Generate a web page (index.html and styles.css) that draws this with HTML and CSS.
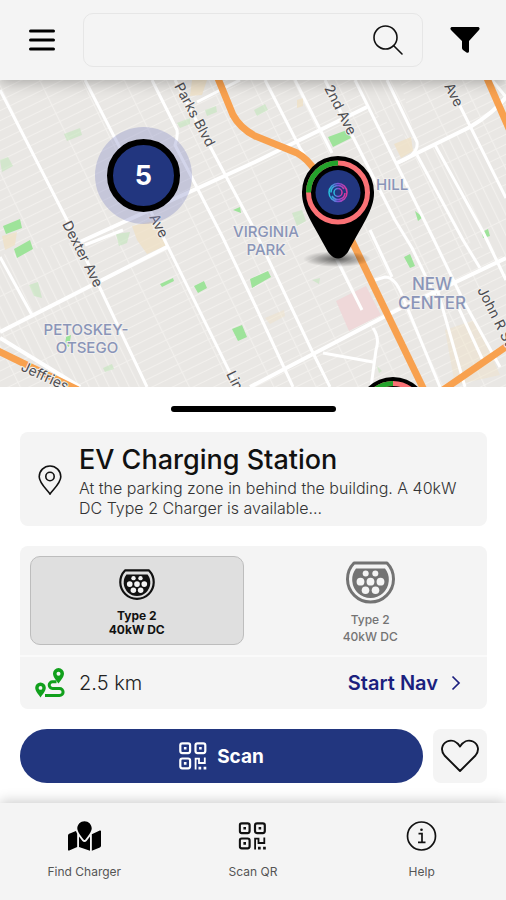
FILE: index.html
```html
<!DOCTYPE html>
<html lang="en">
<head>
<meta charset="utf-8">
<meta name="viewport" content="width=device-width, initial-scale=1">
<title>Find Charger</title>
<link rel="stylesheet" href="styles.css">
</head>
<body>
<svg class="defs" aria-hidden="true">
  <symbol id="qr" viewBox="0 0 28 28">
    <g fill="none" stroke="currentColor" stroke-width="2.2">
      <rect x="1.3" y="1.3" width="9.8" height="9.8" rx="2"/>
      <rect x="16.5" y="1.3" width="9.8" height="9.8" rx="2"/>
      <rect x="1.3" y="16.5" width="9.8" height="9.8" rx="2"/>
      <path d="M16.6 27.5V16.6H20V21H25.8V15.4" stroke-width="1.8"/>
    </g>
    <path fill="currentColor" d="M4.9 4.9h2.600v2.600H4.900zM20.100 4.900h2.600v2.600H20.100zM4.900 20.100h2.600v2.600H4.900zM19.500 24.800h2.700v2.700h-2.700zM24.600 24.800h2.700v2.700h-2.700z"/>
  </symbol>
  <symbol id="type2" viewBox="0 0 49 44">
    <path d="M8 2H41A23 23 0 1 1 8 2Z" fill="none" stroke="currentColor" stroke-width="3" stroke-linejoin="round"/>
    <path d="M10 7.5H39A18.3 18.3 0 1 1 10 7.5Z" fill="currentColor"/>
    <g class="pins">
      <circle cx="19.7" cy="12.6" r="3"/><circle cx="29.3" cy="12.6" r="3"/>
      <circle cx="14.5" cy="20.7" r="3.9"/><circle cx="24.5" cy="20.7" r="3.9"/><circle cx="34.5" cy="20.7" r="3.9"/>
      <circle cx="19.5" cy="29.2" r="3.8"/><circle cx="29.5" cy="29.2" r="3.8"/>
    </g>
  </symbol>
</svg>

<header class="topbar">
  <button class="icon-btn" type="button" aria-label="Menu">
    <svg width="26" height="24" viewBox="0 0 26 24"><path d="M1.500 3H24.500M1.500 12H24.500M1.500 21H24.500" stroke="#000" stroke-width="3" stroke-linecap="round"/></svg>
  </button>
  <form class="search" role="search">
    <input class="search-input" type="search" aria-label="Search">
    <button class="search-btn" type="submit" aria-label="Search">
      <svg width="32" height="32" viewBox="0 0 32 32" fill="none" stroke="#111" stroke-width="1.600" stroke-linecap="round"><circle cx="13.500" cy="13.500" r="11.500"/><path d="M21.500 21.500L30 30"/></svg>
    </button>
  </form>
  <button class="icon-btn" type="button" aria-label="Filter">
    <svg width="30" height="26" viewBox="0 0 30 26"><path d="M1.500 0H28.500Q30.400 1 29 3L19 14V24.500Q18.500 26.500 16.500 25.400L13 23Q12 22.200 12 21V14L1 3Q-.4 1 1.500 0Z"/></svg>
  </button>
</header>

<main>
  <section class="map" aria-label="Map">
    <svg class="map-canvas" viewBox="0 80 506 307">
      <defs>
        <pattern id="blocks" width="38" height="9" patternUnits="userSpaceOnUse" patternTransform="rotate(-26)">
          <path d="M0 .5H38M.5 0V9" stroke="#f2f0ed" stroke-width="1.200"/>
        </pattern>
        <pattern id="blocksTall" width="9" height="38" patternUnits="userSpaceOnUse" patternTransform="rotate(-26)">
          <path d="M0 .5H9M.5 0V38" stroke="#f2f0ed" stroke-width="1.200"/>
        </pattern>
        <radialGradient id="pinShade"><stop offset="0" stop-color="#000" stop-opacity=".6"/><stop offset="1" stop-color="#000" stop-opacity="0"/></radialGradient>
        <linearGradient id="spiral"><stop offset="0" stop-color="#25c3dc"/><stop offset=".5" stop-color="#7b52d8"/><stop offset="1" stop-color="#e0379b"/></linearGradient>
      </defs>
      <rect y="80" width="506" height="307" fill="#e9e7e4"/>
      <rect y="80" width="506" height="307" fill="url(#blocks)"/>
      <path d="M0 255L85 240L100 288L0 332ZM0 332L100 288L147 387H80L0 340ZM352 80H400L417 145L370 110ZM417 155L470 127L506 198V258L463 240Z" fill="#e9e7e4"/>
      <path d="M0 255L85 240L100 288L0 332ZM0 332L100 288L147 387H80L0 340ZM352 80H400L417 145L370 110ZM417 155L470 127L506 198V258L463 240Z" fill="url(#blocksTall)"/>

      <path fill="#efe0c4" d="M132 226L153 221L167 245L147 254L137 240ZM2 236L17 232L15 245L5 250ZM192 80H207L202 95L190 96ZM394 144L411 137L413 151L401 158ZM297 100L303 98V106L297 108Z" opacity=".75"/>
      <path fill="#efe2c4" d="M445 330L475 320L500 375L455 385ZM265 318L284 310L285 316L270 324Z" opacity=".4"/>
      <path fill="#efd8d9" d="M336 301L366 286L381 315L349 331Z"/>
      <path fill="#9ee39a" d="M3 226L20 219L22 228L6 234ZM14 249L30 240L33 249L17 258ZM328 137L347 130L351 138L333 147ZM250 279L268 271L271 277L252 288ZM194 286L204 281L207 288L198 293ZM232 329L242 325L247 337L238 341ZM404 257L410 254L415 266L410 268ZM415 211L423 217L418 221ZM482 232L488 229L490 236L483 238ZM160 284L173 278L174 281L162 287ZM233 210L240 207L241 213ZM66 337L71 335L69 347L65 345Z"/>
      <path fill="#bfe6b8" opacity=".55" d="M64 134L80 128L82 135L67 141ZM0 160L8 157L13 166L2 172ZM116 234L130 232L127 243L119 246ZM29 285L38 282L42 298L34 296ZM254 110L265 104L268 110L257 116ZM292 213L302 210L306 221L297 226ZM205 110L216 106L217 112L207 116ZM177 123L190 118L190 124L180 128ZM103 368L112 364L114 369L105 372ZM312 280L320 278L319 284ZM377 366L382 371L379 373Z"/>

      <g fill="none" stroke="#fff" stroke-width="3" stroke-linejoin="round">
        <path d="M0 90L67 220L100 288L147 387"/>
        <path d="M85 80L120 148L167 245L237 387"/>
        <path d="M152 80L177 130Q178 137 175 145L223 238L255 305L293 387"/>
        <path d="M175 80L213 152L252 225L313 353L330 387"/>
        <path d="M265 80L300 148L318 175"/>
        <path d="M295 80L332 153"/>
        <path d="M325 80L353 137L395 220L412 248L437 300"/>
        <path d="M355 80L433 238L463 300L500 367"/>
        <path d="M387 80L417 142Q419 155 397 163"/>
        <path d="M80 242L255 162L367 107" stroke-width="4"/>
        <path d="M197 102L240 80"/>
        <path d="M397 163L470 127Q495 112 506 97" stroke-width="4"/>
        <path d="M435 145L483 232L506 280"/>
        <path d="M417 155L463 240L480 268"/>
        <path d="M457 100L506 198"/>
        <path d="M492 80L506 97"/>
        <path d="M0 332L167 247" stroke-width="4"/>
        <path d="M0 338L80 387" stroke-width="4"/>
        <path d="M0 257L32 315"/>
        <path d="M85 245L123 230"/>
        <path d="M250 387L397 310L506 258" stroke-width="4"/>
        <path d="M323 353L373 362M373 328Q380 338 376 350L371 387"/>
        <path d="M370 230L392 277M375 280L385 277Q395 277 402 295L440 387"/>
        <path d="M438 292L465 387M455 300L485 365M330 246L362 310"/>
      </g>
      <g fill="none" stroke="#f8a14f" stroke-width="7">
        <path d="M217 76L233 115Q240 128 255 136L297 153Q308 159 316 172"/>
        <path d="M350 237L424 390"/>
        <path d="M486 76L510 131"/>
        <path d="M443 390L510 344"/>
        <path d="M-4 350L78 390"/>
      </g>

      <g class="street">
        <text transform="translate(174 86) rotate(62)">Parks Blvd</text>
        <text transform="translate(324 88) rotate(63)">2nd Ave</text>
        <text transform="translate(444 86) rotate(63)">Ave</text>
        <text transform="translate(62 224) rotate(63)">Dexter Ave</text>
        <text transform="translate(149 217) rotate(63)">Ave</text>
        <text transform="translate(477 290) rotate(63)">John R St</text>
        <text transform="translate(20 370) rotate(25)">Jeffries</text>
        <text transform="translate(226 374) rotate(63)">Lin</text>
      </g>
      <g class="district">
        <text x="266" y="237">VIRGINIA</text>
        <text x="266" y="255">PARK</text>
        <text x="376" y="190" class="from-left">HILL</text>
        <text x="86" y="335">PETOSKEY-</text>
        <text x="87" y="353">OTSEGO</text>
        <text x="432" y="290" class="large">NEW</text>
        <text x="432" y="309" class="large">CENTER</text>
      </g>

      <ellipse cx="337" cy="259" rx="34" ry="8" fill="url(#pinShade)"/>
      <path d="M338 156A36 36 0 0 1 374 193C374 210 362 225 348 252Q338 265 328 252C314 225 302 210 302 193A36 36 0 0 1 338 156Z"/>
      <circle cx="338" cy="192.500" r="22.500" fill="#22367f"/>
      <circle cx="338" cy="192.500" r="29.500" fill="none" stroke="#fa7175" stroke-width="5"/>
      <path d="M308.500 192.500A29.500 29.500 0 0 1 338 163" fill="none" stroke="#24a32c" stroke-width="5"/>
      <g fill="none" stroke="url(#spiral)" stroke-width="1.500">
        <circle cx="338" cy="192.500" r="9"/><circle cx="338" cy="192.500" r="4"/>
        <path d="M331 192.500A7 7 0 0 1 344 189M345 193A7 7 0 0 1 332 196"/>
      </g>
      <circle cx="393" cy="413" r="36"/>
      <circle cx="393" cy="413" r="29.500" fill="none" stroke="#fa7175" stroke-width="5"/>
      <path d="M363.500 413A29.500 29.500 0 0 1 393 383.500" fill="none" stroke="#24a32c" stroke-width="5"/>
      <circle cx="143.500" cy="175.500" r="48.500" fill="#8b91c9" opacity=".38"/>
      <circle cx="143.500" cy="175.500" r="33.500" fill="#22367f" stroke="#000" stroke-width="6"/>
      <text class="cluster-count" x="143.500" y="185">5</text>
    </svg>
  </section>

  <section class="sheet" aria-label="Selected station">
    <div class="grabber"></div>

    <article class="card station">
      <svg class="station-pin" width="24" height="30" viewBox="0 0 24 30" fill="none" stroke="#111" stroke-width="1.600"><path d="M12 29C10 25.500 1.200 18.500 1.200 11.800A10.800 10.800 0 0 1 22.800 11.800C22.800 18.500 14 25.500 12 29Z"/><circle cx="12" cy="11.500" r="4.200"/></svg>
      <div class="station-text">
        <h1 class="station-name">EV Charging Station</h1>
        <p class="station-info">At the parking zone in behind the building. A 40kW DC Type 2 Charger is available...</p>
      </div>
    </article>

    <div class="card options">
      <div class="connectors">
        <button class="connector selected" type="button" aria-pressed="true">
          <svg class="plug"><use href="#type2"/></svg>
          <span>Type 2<br>40kW DC</span>
        </button>
        <button class="connector" type="button" aria-pressed="false">
          <svg class="plug"><use href="#type2"/></svg>
          <span>Type 2<br>40kW DC</span>
        </button>
      </div>
      <div class="distance-row">
        <svg width="30" height="30" viewBox="0 0 30 30" fill="#11a01c">
          <path fill-rule="evenodd" d="M23.500 0A5.600 5.600 0 0 1 29 5.600C29 9 25.500 13 23.500 15.500C21.500 13 18 9 18 5.600A5.600 5.600 0 0 1 23.500 0ZM23.500 3.700A2 2 0 1 0 23.500 7.700A2 2 0 1 0 23.500 3.700Z"/>
          <path fill-rule="evenodd" d="M5.500 14.500A5.300 5.300 0 0 1 10.800 19.800C10.800 23 7.500 26.500 5.500 29.500C3.500 26.500 .2 23 .2 19.800A5.300 5.300 0 0 1 5.500 14.500ZM5.500 18A1.900 1.900 0 1 0 5.500 21.800A1.900 1.900 0 1 0 5.500 18Z"/>
          <path d="M21.500 13.800H17.500A3.300 3.300 0 0 0 17.500 20.400H24.500A3.600 3.600 0 0 1 24.500 27.600H10" fill="none" stroke="#11a01c" stroke-width="3"/>
        </svg>
        <span class="distance">2.5 km</span>
        <a class="start-nav" href="#nav">Start Nav
          <svg width="10" height="16" viewBox="0 0 10 16" fill="none" stroke="#1b1f7e" stroke-width="1.700"><path d="M1.500 1.500L8 8L1.500 14.500"/></svg>
        </a>
      </div>
    </div>

    <div class="actions">
      <button class="scan" type="button"><svg class="scan-icon"><use href="#qr"/></svg>Scan</button>
      <button class="favourite" type="button" aria-label="Add to favourites">
        <svg width="38" height="34" viewBox="0 0 38 34" fill="none" stroke="#111" stroke-width="1.900" stroke-linejoin="round"><path d="M19 32L3.500 16.500C-.8 11.500 .8 5 6 2.500C11 .2 16 2.500 19 7.500C22 2.500 27 .2 32 2.500C37.200 5 38.800 11.500 34.500 16.500Z"/></svg>
      </button>
    </div>
  </section>
</main>

<nav class="tabs" aria-label="Main">
  <a class="tab" href="#find">
    <svg class="tab-icon" viewBox="0 0 576 512"><path d="M288 0c-69.590 0-126 56.410-126 126 0 56.260 82.350 158.800 113.900 196.020 6.390 7.540 17.820 7.540 24.200 0C331.650 284.800 414 182.260 414 126 414 56.410 357.590 0 288 0zM20.120 215.950A32.006 32.006 0 0 0 0 245.660v250.320c0 11.320 11.430 19.060 21.940 14.860L160 448V214.920c-8.840-15.980-16.070-31.540-21.250-46.420L20.120 215.950zM288 359.670c-14.070 0-27.380-6.180-36.510-16.960-19.660-23.200-40.570-49.620-59.490-76.720v182l192 64V266c-18.920 27.090-39.820 53.520-59.490 76.720-9.130 10.770-22.440 16.950-36.510 16.950zM554.060 161.160L416 224v288l139.880-55.950A31.996 31.996 0 0 0 576 426.340V176.020c0-11.320-11.430-19.060-21.940-14.860z"/></svg>
    Find Charger
  </a>
  <a class="tab" href="#scan">
    <svg class="tab-icon" viewBox="-2 -1 32 30"><use href="#qr" width="28" height="28"/></svg>
    Scan QR
  </a>
  <a class="tab" href="#help">
    <svg class="tab-icon" viewBox="0 0 30 30" fill="none" stroke="#111" stroke-width="1.700"><circle cx="15" cy="15" r="14"/><path d="M12 12.700H15.500V21M11.500 21.300H19"/><circle cx="15" cy="8.700" r="1.300" fill="#111" stroke="none"/></svg>
    Help
  </a>
</nav>
</body>
</html>
```
FILE: styles.css
```css
* {
  box-sizing: border-box;
}

body {
  margin: 0;
  min-height: 100vh;
  display: flex;
  flex-direction: column;
  background: #fff;
  color: #111;
  font-family: Inter, "Liberation Sans", sans-serif;
}

button,
input {
  margin: 0;
  padding: 0;
  border: 0;
  background: none;
  color: inherit;
  font: inherit;
}

a {
  color: inherit;
  text-decoration: none;
}

svg {
  display: block;
  flex: none;
}

.defs {
  position: absolute;
  width: 0;
  height: 0;
}

/* Top bar */
.topbar {
  position: relative;
  z-index: 1;
  display: flex;
  align-items: center;
  height: 80px;
  background: #f4f4f4;
  box-shadow: 0 2px 14px rgba(0, 0, 0, 0.3);
}

.icon-btn {
  flex: none;
  display: grid;
  place-items: center;
  width: 83px;
  height: 54px;
}

.search {
  flex: 1;
  display: flex;
  align-items: center;
  height: 54px;
  border: 1px solid #e6e6e6;
  border-radius: 10px;
}

.search-input {
  flex: 1;
  min-width: 0;
  height: 100%;
  padding-left: 16px;
  outline: none;
}

.search-btn {
  padding: 0 18px;
}

/* Map */
.map-canvas {
  width: 100%;
  height: auto;
}

.street {
  fill: #4c4c50;
  font-size: 14px;
  stroke: #f1efed;
  stroke-width: 2px;
  paint-order: stroke;
}

.district {
  fill: #8a95b8;
  font-size: 15px;
  font-weight: 500;
  text-anchor: middle;
  stroke: #f1efed;
  stroke-width: 2px;
  paint-order: stroke;
}

.district .from-left {
  text-anchor: start;
}

.district .large {
  font-size: 17px;
}

.cluster-count {
  fill: #fff;
  font-size: 27px;
  font-weight: 700;
  text-anchor: middle;
}

/* Bottom sheet */
.sheet {
  display: flex;
  flex-direction: column;
  gap: 20px;
  padding: 19px 19px 20px 20px;
}

.grabber {
  width: 165px;
  height: 6px;
  border-radius: 3px;
  background: #000;
  align-self: center;
}

.card {
  background: #f4f4f4;
  border-radius: 8px;
}

.station {
  display: flex;
  align-items: center;
  gap: 17px;
  padding: 10px 18px 8px;
}

.station-name {
  margin: 0;
  font-size: 27px;
  font-weight: 500;
  line-height: 36px;
}

.station-info {
  margin: 0;
  font-size: 16px;
  font-weight: 300;
  line-height: 20px;
  color: #333;
}

.connectors {
  display: grid;
  grid-template-columns: 1fr 1fr;
  gap: 20px;
  padding: 10px;
}

.connector {
  display: flex;
  flex-direction: column;
  align-items: center;
  justify-content: center;
  gap: 6px;
  height: 89px;
  padding-top: 4px;
  border: 1px solid transparent;
  border-radius: 10px;
  color: #737373;
  font-size: 12px;
  font-weight: 500;
  line-height: 17px;
}

.plug {
  width: 49px;
  height: 44px;
}

.pins {
  fill: #f4f4f4;
}

.connector.selected {
  gap: 8px;
  border-color: #bdbdbd;
  background: #dfdfdf;
  color: #111;
  font-weight: 700;
  line-height: 14px;
}

.selected .plug {
  width: 36px;
  height: 32px;
}

.distance-row {
  display: flex;
  align-items: center;
  gap: 14px;
  height: 54px;
  padding: 0 26px 0 15px;
  border-top: 2px solid #fafafa;
}

.distance {
  flex: 1;
  font-size: 20px;
  font-weight: 300;
  color: #222;
}

.start-nav {
  display: flex;
  align-items: center;
  gap: 13px;
  color: #1b1f7e;
  font-size: 20px;
  font-weight: 600;
}

.actions {
  display: flex;
  gap: 10px;
}

.scan {
  flex: 1;
  display: flex;
  align-items: center;
  justify-content: center;
  gap: 10px;
  height: 54px;
  border-radius: 27px;
  background: #22367f;
  color: #fff;
  font-size: 19px;
  font-weight: 700;
}

.scan-icon {
  width: 28px;
  height: 28px;
}

.favourite {
  display: grid;
  place-items: center;
  width: 54px;
  height: 54px;
  border-radius: 8px;
  background: #f4f4f4;
}

/* Tab bar */
.tabs {
  flex: 1;
  display: grid;
  grid-template-columns: repeat(3, 1fr);
  min-height: 97px;
  background: #f4f4f4;
  box-shadow: 0 -2px 12px rgba(0, 0, 0, 0.2);
}

.tab {
  display: flex;
  flex-direction: column;
  align-items: center;
  gap: 13px;
  padding-top: 18px;
  color: #555;
  font-size: 12px;
  line-height: 16px;
}

.tab-icon {
  width: 33px;
  height: 30px;
  color: #111;
}
```
